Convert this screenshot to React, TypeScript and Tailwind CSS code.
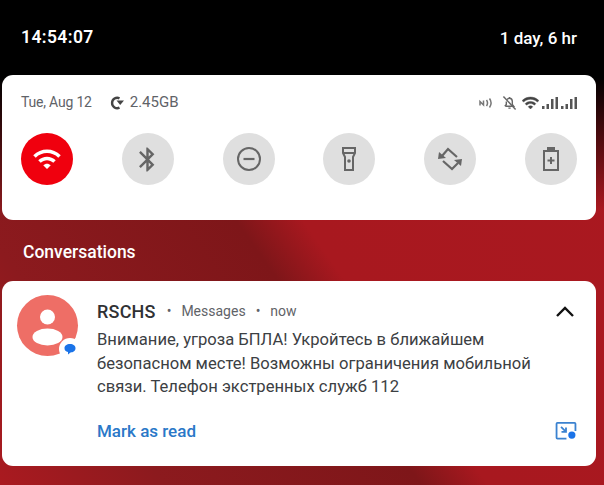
const WIFI =
  "M1 9l2 2c4.97-4.97 13.03-4.97 18 0l2-2C16.93 2.93 7.08 2.93 1 9zm8 8l3 3 3-3c-1.65-1.66-4.34-1.66-6 0zm-4-4l2 2c2.76-2.76 7.24-2.76 10 0l2-2C15.14 9.14 8.87 9.14 5 13z";
const BLUETOOTH =
  "M17.71 7.71L12 2h-1v7.59L6.41 5 5 6.41 10.59 12 5 17.59 6.41 19 11 14.41V22h1l5.71-5.71-4.3-4.29 4.3-4.29zM13 5.83l1.88 1.88L13 9.59V5.83zm1.88 10.46L13 18.17v-3.76l1.88 1.88z";

function Signal() {
  return (
    <svg width="16" height="12" viewBox="0 0 16 12" fill="#555">
      <rect x="0" y="9" width="2.500" height="3" />
      <rect x="4.500" y="7" width="2.500" height="5" />
      <rect x="9" y="2" width="2.500" height="10" />
      <rect x="13.500" y="0" width="2.500" height="12" />
    </svg>
  );
}

function StatusIcons() {
  return (
    <div className="flex items-center">
      <svg width="14" height="12" viewBox="0 0 14 12" fill="none" stroke="#777" strokeWidth="1.500" className="mr-[9px]">
        <path d="M1 8.500V4.500l3.500 3.500V3.500" />
        <path d="M7.500 3c1.300 1.900 1.300 4.100 0 6M10.500 1.500c2 2.800 2 6.200 0 9" />
      </svg>
      <svg width="15" height="16" viewBox="0 0 16 16" fill="none" stroke="#666" strokeWidth="1.500" className="mr-[5px]">
        <path d="M4 11.500h8.500L11 9.500V6.500C11 4.500 9.700 3 8 3 6.900 3 6 3.500 5.400 4.400M4.600 6.500v3L3 11.500" />
        <path d="M6.800 13.500h2.400M8 1.500v1.200" />
        <path d="M1.500 1l13 14" />
      </svg>
      <svg width="17" height="13" viewBox="1 3 22 17" fill="#444" stroke="#444" strokeWidth="0.600" className="mr-[3px]">
        <path d={WIFI} />
      </svg>
      <Signal />
      <div className="ml-[3px]">
        <Signal />
      </div>
    </div>
  );
}

function Tile({ active, children }: { active?: boolean; children: React.ReactNode }) {
  return (
    <div
      className={
        active
          ? "flex h-[52px] w-[52px] items-center justify-center rounded-full bg-[#f0000e]"
          : "flex h-[52px] w-[52px] items-center justify-center rounded-full bg-[#dfdfdf]"
      }
    >
      {children}
    </div>
  );
}

export default function App() {
  return (
    <div className="flex h-[485px] w-[604px] flex-col overflow-hidden bg-[linear-gradient(180deg,#000_0px,#000_78px,rgba(0,0,0,0)_210px),linear-gradient(55deg,#aa1a20_0px,#8c1a1e_135px,#7e1619_345px,#a8181f_400px,#aa1820_100%)] font-['Roboto','Open_Sans',sans-serif]">
      <div className="flex h-[75px] shrink-0 items-center justify-between pl-[21px] pr-[27px] pt-[1px] text-white">
        <span className="text-[17.500px] font-semibold leading-none tracking-[0.4px]">14:54:07</span>
        <span className="text-[17px] font-medium leading-none">1 day, 6 hr</span>
      </div>

      <div className="ml-[2px] flex h-[145px] w-[594px] shrink-0 flex-col rounded-[11px] bg-white px-[19px]">
        <div className="flex h-[58px] shrink-0 items-center justify-between pb-[3px]">
          <div className="flex items-center text-[#5f6368]">
            <span className="text-[14px] tracking-[-0.2px]">Tue, Aug 12</span>
            <svg width="15" height="14" viewBox="0 0 15 14" className="ml-[18px] mr-[5px]">
              <path d="M9.500 2.300A5.200 5.200 0 1 0 9.500 11.700" fill="none" stroke="#444" strokeWidth="2.400" />
              <path d="M6.500 4.500h7.500L10.200 9Z" fill="#444" />
            </svg>
            <span className="text-[15px]">2.45GB</span>
          </div>
          <StatusIcons />
        </div>

        <div className="flex justify-between">
          <Tile active>
            <svg width="30" height="30" viewBox="0 0 24 24" fill="#fff">
              <path d={WIFI} />
            </svg>
          </Tile>
          <Tile>
            <svg width="29" height="29" viewBox="0 0 24 24" fill="#666">
              <path d={BLUETOOTH} />
            </svg>
          </Tile>
          <Tile>
            <svg width="26" height="26" viewBox="0 0 26 26" fill="none" stroke="#666" strokeWidth="2">
              <circle cx="13" cy="13" r="11" />
              <path d="M7.500 13h11" strokeWidth="2.200" />
            </svg>
          </Tile>
          <Tile>
            <svg width="14" height="24" viewBox="0 0 14 24" fill="none" stroke="#666" strokeWidth="2">
              <path d="M1 1h12v5l-2 4v13H3V10L1 6z" />
              <path d="M1 6h12" />
              <circle cx="7" cy="14" r="1.800" fill="#666" stroke="none" />
            </svg>
          </Tile>
          <Tile>
            <svg width="26" height="24" viewBox="0 0 26 24" fill="none" stroke="#666" strokeWidth="2.200">
              <path d="M5 9l6-7 9 8" />
              <path d="M6 14l9 8 6-6" />
              <path d="M1 12 2 5 9 11Z" fill="#666" stroke="none" />
              <path d="M25 12 24 19 17 13Z" fill="#666" stroke="none" />
            </svg>
          </Tile>
          <Tile>
            <svg width="16" height="24" viewBox="0 0 16 24" fill="none" stroke="#666" strokeWidth="2">
              <path d="M1 4h14v19H1z" />
              <path d="M5 1h6v3H5z" fill="#666" />
              <path d="M4.500 13.500h7M8 10v7" strokeWidth="2" />
            </svg>
          </Tile>
        </div>
      </div>

      <div className="flex h-[61px] shrink-0 items-center pl-[23px] pt-[3px] text-[17.500px] font-medium text-white">Conversations</div>

      <div className="ml-[2px] flex h-[185px] w-[594px] shrink-0 rounded-[11px] bg-white pl-[15px] pr-[20px] pt-[15px]">
        <div className="relative mt-[-1px] h-[61px] w-[61px] shrink-0">
          <div className="h-[61px] w-[61px] rounded-full bg-[#ee6e66]">
            <svg width="61" height="61" viewBox="0 0 61 61" fill="#fff">
              <circle cx="30.500" cy="22" r="7.500" />
              <ellipse cx="30.500" cy="42" rx="15" ry="8.500" />
            </svg>
          </div>
          <div className="absolute left-[42px] top-[43px] flex h-[22px] w-[22px] items-center justify-center rounded-full bg-white">
            <svg width="12" height="11" viewBox="0 0 12 11" fill="#1a73e8">
              <path d="M6 0c3.300 0 5.500 1.700 5.500 4.200S9.300 8.400 6.500 8.400L4 10.500V8.100C1.800 7.600.5 6.200.5 4.200.5 1.700 2.700 0 6 0z" />
            </svg>
          </div>
        </div>

        <div className="ml-[19px] flex min-w-0 flex-1 flex-col">
          <div className="flex h-[30px] items-center justify-between">
            <div className="flex items-center">
              <span className="text-[18px] font-medium tracking-[0.2px] text-[#303134]">RSCHS</span>
              <span className="ml-[11px] text-[14px] text-[#5f6368]">•</span>
              <span className="ml-[10px] text-[14px] text-[#5f6368]">Messages</span>
              <span className="ml-[10px] text-[14px] text-[#5f6368]">•</span>
              <span className="ml-[10px] text-[14px] text-[#5f6368]">now</span>
            </div>
            <svg width="20" height="12" viewBox="0 0 20 12" fill="none" stroke="#111" strokeWidth="2.400" className="ml-[-1px] mr-[1px]">
              <path d="M2 11l8-8 8 8" />
            </svg>
          </div>
          <p className="mt-[2px] text-[16.600px] leading-[23.500px] text-[#3c4043]">
            Внимание, угроза БПЛА! Укройтесь в ближайшем
            <br />
            безопасном месте! Возможны ограничения мобильной
            <br />
            связи. Телефон экстренных служб 112
          </p>
          <div className="mt-[20px] flex items-center justify-between">
            <span className="text-[17px] font-medium text-[#2a78c8]">Mark as read</span>
            <svg width="22" height="18" viewBox="0 0 23 20" fill="none" stroke="#3b82d0" strokeWidth="2" className="mr-[-1px]">
              <path d="M12 18.500H2a1 1 0 0 1-1-1V2a1 1 0 0 1 1-1h19a1 1 0 0 1 1 1v8" />
              <path d="M6 5.500l5 5M11.500 6v5h-5" />
              <circle cx="18" cy="14.500" r="4" fill="#1a73e8" stroke="none" />
            </svg>
          </div>
        </div>
      </div>
    </div>
  );
}
